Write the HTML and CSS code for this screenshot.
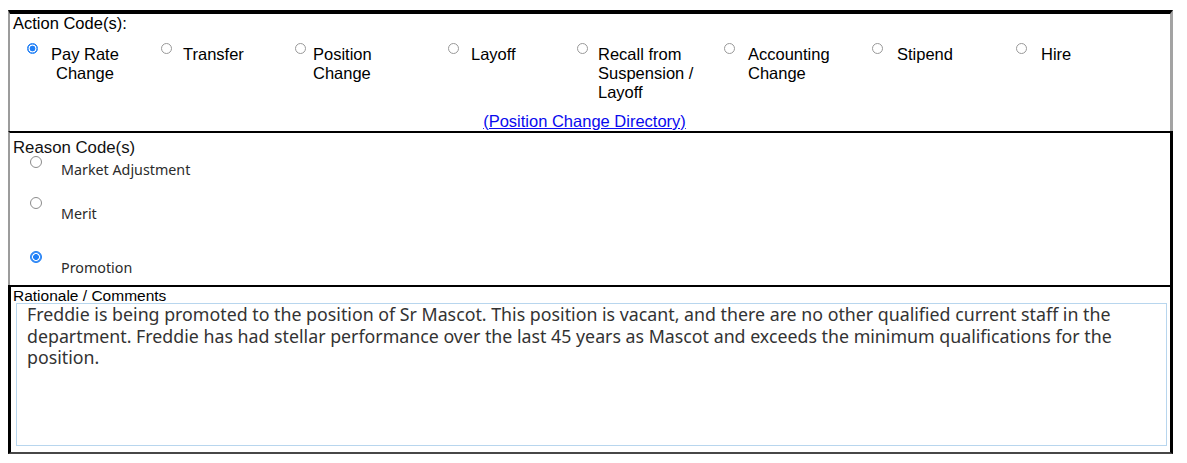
FILE: index.html
```html
<!DOCTYPE html>
<html lang="en">
<head>
<meta charset="utf-8">
<title>Action Codes</title>
<link rel="stylesheet" href="styles.css">
</head>
<body>
<div class="form">
  <section class="sec sec-action">
    <div class="sec-title">Action Code(s):</div>
    <div class="action-grid">
      <input type="radio" name="action" class="radio" checked>
      <label class="opt opt-center">Pay Rate<br>Change</label>
      <input type="radio" name="action" class="radio">
      <label class="opt">Transfer</label>
      <input type="radio" name="action" class="radio">
      <label class="opt">Position<br>Change</label>
      <input type="radio" name="action" class="radio">
      <label class="opt">Layoff</label>
      <input type="radio" name="action" class="radio">
      <label class="opt">Recall from<br>Suspension /<br>Layoff</label>
      <input type="radio" name="action" class="radio">
      <label class="opt">Accounting<br>Change</label>
      <input type="radio" name="action" class="radio">
      <label class="opt">Stipend</label>
      <input type="radio" name="action" class="radio">
      <label class="opt">Hire</label>
    </div>
    <div class="link-row"><a href="#" class="dir-link">(Position Change Directory)</a></div>
  </section>

  <section class="sec sec-reason">
    <div class="sec-title">Reason Code(s)</div>
    <div class="reason-list">
      <div class="reason-row">
        <input type="radio" name="reason" class="radio radio-lg">
        <label class="reason-label">Market Adjustment</label>
      </div>
      <div class="reason-row">
        <input type="radio" name="reason" class="radio radio-lg">
        <label class="reason-label">Merit</label>
      </div>
      <div class="reason-row">
        <input type="radio" name="reason" class="radio radio-lg" checked>
        <label class="reason-label">Promotion</label>
      </div>
    </div>
  </section>

  <section class="sec sec-comments">
    <div class="sec-title sec-title-sm">Rationale / Comments</div>
    <textarea class="comments">Freddie is being promoted to the position of Sr Mascot. This position is vacant, and there are no other qualified current staff in the department. Freddie has had stellar performance over the last 45 years as Mascot and exceeds the minimum qualifications for the position. </textarea>
  </section>
</div>
</body>
</html>
```

FILE: styles.css
```css
html, body {
  margin: 0;
  padding: 0;
  background: #fff;
}

body {
  font-family: "Liberation Sans", Arial, sans-serif;
  color: #000;
}

.form {
  margin: 10px 0 0 8px;
  width: 1165px;
}

.sec {
  box-sizing: border-box;
}

.sec-action {
  border-top: 4px solid #000;
  border-left: 2px solid #9c9c9c;
  border-right: 3px solid #a3a3a3;
  height: 121px;
}

.sec-title {
  font-size: 16.5px;
  line-height: 19px;
  padding-left: 3px;
}

.action-grid {
  display: grid;
  grid-template-columns: 24px 110px 22px 112px 18px 135px 23px 106px 21px 126px 24px 124px 25px 119px 25px auto;
  align-items: start;
  margin-top: 12px;
  padding-left: 17px;
  font-size: 16.5px;
  line-height: 19px;
}

.opt-center {
  justify-self: start;
  text-align: center;
}

.radio {
  appearance: none;
  -webkit-appearance: none;
  box-sizing: border-box;
  width: 11px;
  height: 11px;
  margin: -2px 0 0 0;
  border: 1px solid #999;
  border-radius: 50%;
  background: #fff;
}

.radio:checked {
  border-color: #1a7cf5;
  background: radial-gradient(circle, #1f7ff7 0 2.6px, #ffffff 3.2px 3.6px, #4a97f7 4.2px);
}

.radio-lg {
  width: 12px;
  height: 12px;
  margin-top: -1px;
  border-color: #8c8c8c;
}

.link-row {
  margin-top: 10px;
  padding-right: 11px;
  text-align: center;
  font-size: 16.5px;
  line-height: 19px;
}

.dir-link {
  color: #0a0aee;
  text-decoration: underline;
}

.sec-reason {
  border-top: 2px solid #000;
  border-left: 2px solid #9c9c9c;
  border-right: 3px solid #000;
  height: 154px;
  padding-top: 5px;
}

.sec-reason .sec-title {
  font-size: 16.8px;
  color: #111;
}

.reason-list {
  padding-left: 20px;
}

.reason-row {
  display: flex;
  align-items: flex-start;
}

.reason-row:nth-child(1) {
  height: 41px;
}

.reason-row:nth-child(2) {
  height: 54px;
}

.reason-label {
  margin-left: 19px;
  margin-top: 3px;
  font-family: "Noto Sans", "Open Sans", sans-serif;
  font-size: 14.3px;
  line-height: 19px;
  color: #2b2b2b;
}

.reason-row:nth-child(2) .reason-label,
.reason-row:nth-child(3) .reason-label {
  margin-top: 6px;
}

.sec-comments {
  border-top: 2px solid #000;
  border-left: 3px solid #000;
  border-right: 3px solid #000;
  border-bottom: 2px solid #474747;
  height: 169px;
  padding-top: 2px;
}

.sec-title-sm {
  font-size: 15.5px;
  line-height: 14px;
  padding-left: 2px;
}

.comments {
  display: block;
  box-sizing: border-box;
  width: 1151px;
  height: 143px;
  margin: 0 0 0 5px;
  padding: 0 10px;
  border: 1px solid #b8d6ee;
  outline: none;
  resize: none;
  font-family: "Noto Sans", "Open Sans", sans-serif;
  font-size: 17.8px;
  line-height: 21.5px;
  color: #333;
  background: #fff;
  overflow: hidden;
}
```
